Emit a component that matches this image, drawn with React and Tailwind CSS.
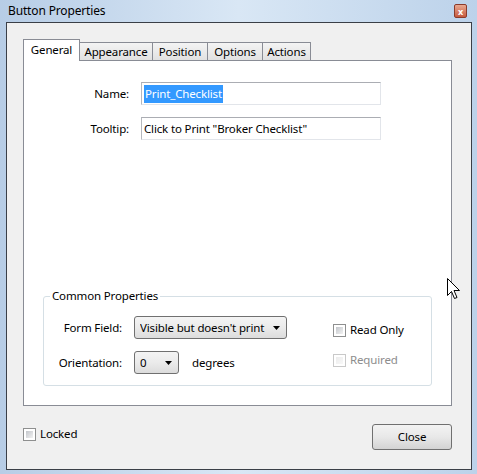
import React from "react";

const font = "font-['Noto_Sans','Open_Sans',sans-serif]";

function Checkbox({ disabled }) {
  return (
    <span
      className={`inline-block w-[13px] h-[13px] border p-[2px] bg-white ${
        disabled ? "border-[#c9c9c9]" : "border-[#8e8f8f]"
      }`}
    >
      <span
        className={`block w-full h-full ${
          disabled
            ? "bg-linear-to-br from-[#ececec] to-[#f8f8f8]"
            : "bg-linear-to-br from-[#c3c6cb] to-[#f2f2f2]"
        }`}
      />
    </span>
  );
}

function Arrow() {
  return (
    <svg width="7" height="4" viewBox="0 0 7 4" className="shrink-0">
      <path d="M0 0h7L3.5 4z" fill="#000" />
    </svg>
  );
}

function Combo({ value, className }) {
  return (
    <div
      className={`flex items-center h-[23px] border border-[#707070] rounded-[3px] bg-linear-to-b from-[#f4f4f4] via-[#ebebeb] to-[#dcdcdc] pl-[5px] pr-[6px] ${className}`}
    >
      <span className="flex-1 whitespace-nowrap overflow-hidden">{value}</span>
      <Arrow />
    </div>
  );
}

function Field({ label, children }) {
  return (
    <div className="flex items-center h-[23px]">
      <span className="w-[105px] text-right">{label}</span>
      <div className="ml-[12px] w-[240px] h-[23px] border border-[#e2e5ea] border-t-[#abadb3] border-l-[#b5b8bd] bg-white flex items-center pl-[2px]">
        {children}
      </div>
    </div>
  );
}

export default function App() {
  const tabs = [
    { name: "General", w: "w-[57px]" },
    { name: "Appearance", w: "w-[74px]" },
    { name: "Position", w: "w-[56px]" },
    { name: "Options", w: "w-[56px]" },
    { name: "Actions", w: "w-[49px]" },
  ];

  return (
    <div
      className={`relative w-[477px] h-[474px] overflow-hidden bg-linear-to-r from-[#b7cde6] via-[#d9e7f5] to-[#bcd2ea] text-[11.5px] tracking-[-0.15px] text-black ${font}`}
    >
      {/* title bar */}
      <div className="h-[22px] flex items-center pl-[8px] pr-[10px]">
        <span className="text-[12px]">Button Properties</span>
        <div className="ml-auto w-[13px] h-[14px] rounded-[2px] border border-[#8b3b2b] bg-linear-to-b from-[#e9a890] to-[#c55a3e] flex items-center justify-center text-white text-[9px] font-bold leading-none">
          x
        </div>
      </div>

      {/* client area */}
      <div className="ml-[6px] w-[466px] h-[448px] border border-[#3a3f47] bg-[#f0f0f0] flex flex-col">
        <div className="ml-[16px] pt-[16px]">
          {/* tabs */}
          <div className="flex items-end h-[21px]">
            {tabs.map((t, i) =>
              i === 0 ? (
                <div
                  key={t.name}
                  className={`${t.w} h-[22px] -mb-px relative z-10 border border-b-0 border-[#898c95] bg-white flex items-center justify-center pb-[2px]`}
                >
                  {t.name}
                </div>
              ) : (
                <div
                  key={t.name}
                  className={`${t.w} h-[18px] -ml-px border border-b-0 border-[#898c95] bg-linear-to-b from-[#f4f4f4] to-[#e1e1e1] flex items-center justify-center`}
                >
                  {t.name}
                </div>
              )
            )}
          </div>

          {/* panel */}
          <div className="w-[429px] h-[346px] border border-[#898c95] bg-white flex flex-col pt-[21px]">
            <div className="flex flex-col gap-[12px]">
              <Field label="Name:">
                <span className="bg-[#3399ff] text-white leading-[18px] px-px">
                  Print_Checklist
                </span>
              </Field>
              <Field label="Tooltip:">
                <span>Click to Print "Broker Checklist"</span>
              </Field>
            </div>

            <fieldset className="mt-auto mx-[19px] mb-[19px] border border-[#d5dfe5] rounded-[3px] h-[98px]">
              <legend className="ml-[6px] px-[2px] leading-[16px]">
                Common Properties
              </legend>
              <div className="flex mt-[12px]">
                <div className="flex flex-col gap-[12px]">
                  <div className="flex items-center">
                    <span className="w-[78px] text-right">Form Field:</span>
                    <Combo
                      value="Visible but doesn't print"
                      className="ml-[12px] w-[153px]"
                    />
                  </div>
                  <div className="flex items-center">
                    <span className="w-[78px] text-right">Orientation:</span>
                    <Combo value="0" className="ml-[12px] w-[45px]" />
                    <span className="ml-[13px]">degrees</span>
                  </div>
                </div>
                <div className="ml-[46px] pt-[5px] flex flex-col gap-[12px]">
                  <div className="flex items-center gap-[4px] h-[18px]">
                    <Checkbox />
                    <span>Read Only</span>
                  </div>
                  <div className="flex items-center gap-[4px] h-[18px] text-[#8d8d8d]">
                    <Checkbox disabled />
                    <span>Required</span>
                  </div>
                </div>
              </div>
            </fieldset>
          </div>

          {/* bottom row */}
          <div className="w-[429px] flex justify-between">
            <div className="mt-[19px] flex items-center gap-[4px] h-[18px]">
              <Checkbox />
              <span>Locked</span>
            </div>
            <button className="mt-[18px] w-[80px] h-[26px] border border-[#707070] rounded-[3px] bg-linear-to-b from-[#f3f3f3] via-[#e8e8e8] to-[#d3d3d3] flex items-center justify-center">
              Close
            </button>
          </div>
        </div>
      </div>

      {/* mouse cursor */}
      <svg
        className="absolute left-[447px] top-[278px]"
        width="13"
        height="21"
        viewBox="0 0 13 21"
      >
        <path
          d="M0.5 0.5V17.5L4.5 13.5L7.5 20.5L10 19.5L7 12.5H12.5Z"
          fill="#fff"
          stroke="#000"
          strokeWidth="1"
          strokeLinejoin="miter"
        />
      </svg>
    </div>
  );
}
